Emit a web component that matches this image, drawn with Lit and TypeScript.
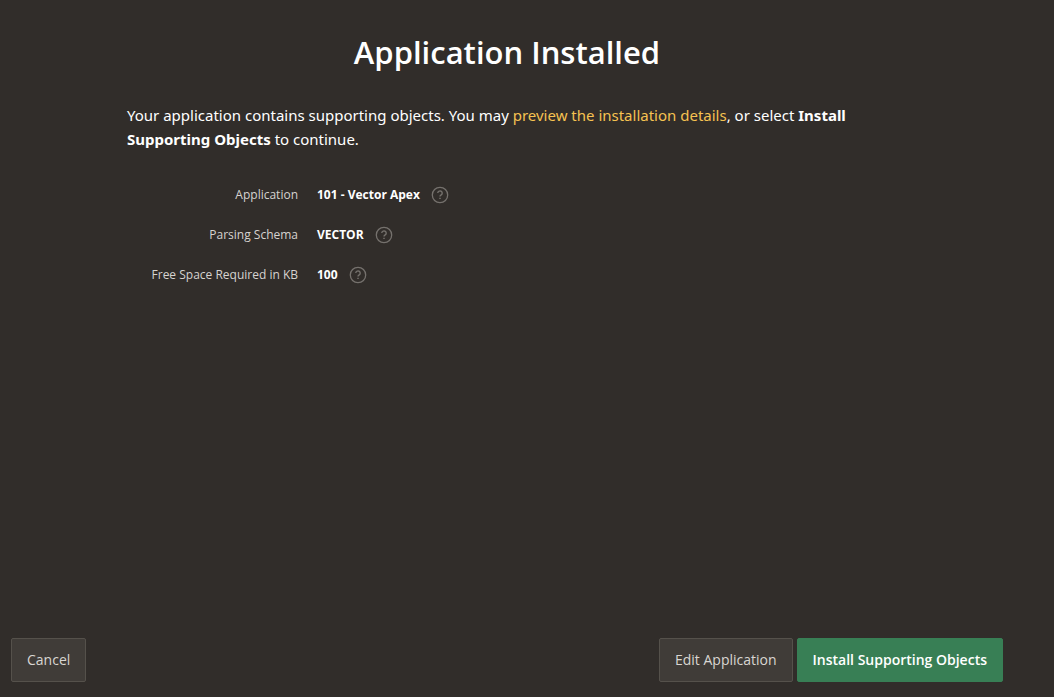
import { LitElement, html, css } from "lit";
import { customElement, property } from "lit/decorators.js";

@customElement("help-button")
class HelpButton extends LitElement {
  @property() label = "";

  static styles = css`
    :host {
      display: inline-flex;
    }
    .help {
      display: flex;
      padding: 0;
      border: 0;
      background: none;
      color: #75716d;
      cursor: pointer;
    }
    .icon {
      width: 18px;
      height: 18px;
    }
  `;

  render() {
    return html`
      <button class="help" type="button" aria-label="Help: ${this.label}">
        <svg class="icon" viewBox="0 0 18 18" fill="none" stroke="currentColor" aria-hidden="true">
          <circle cx="9" cy="9" r="7.7" stroke-width="1.3" />
          <path d="M6.8 7.1a2.2 2.1 0 1 1 3.4 1.7c-.8.5-1.2.8-1.2 1.7" stroke-width="1.4" />
          <path d="M9 11.7v1.4" stroke-width="1.5" />
        </svg>
      </button>
    `;
  }
}

interface Field {
  label: string;
  value: string;
}

@customElement("app-root")
class AppRoot extends LitElement {
  private fields: Field[] = [
    { label: "Application", value: "101 - Vector Apex" },
    { label: "Parsing Schema", value: "VECTOR" },
    { label: "Free Space Required in KB", value: "100" },
  ];

  static styles = css`
    :host {
      display: flex;
      flex-direction: column;
      box-sizing: border-box;
      min-height: 100vh;
      padding: 32px 51px 15px 11px;
      background: #312d2a;
      color: #fff;
      font-family: "Open Sans", "Noto Sans", sans-serif;
    }
    .content {
      flex: 1;
      width: 100%;
      max-width: 760px;
      margin: 0 auto;
    }
    .title {
      margin: 0;
      font-size: 31px;
      line-height: 40px;
      font-weight: 600;
      text-align: center;
    }
    .intro {
      margin: 31px 0 24px;
      font-family: "Noto Sans", sans-serif;
      font-size: 15px;
      line-height: 24px;
    }
    .link {
      color: #f6c251;
      text-decoration: none;
    }
    .fields {
      margin: 0;
    }
    .field {
      display: flex;
      align-items: center;
      height: 40px;
      font-size: 12px;
      line-height: 16px;
    }
    .label {
      width: 171px;
      margin-right: 19px;
      text-align: right;
      color: #d6d3d0;
    }
    .value {
      display: flex;
      align-items: center;
      gap: 11px;
      margin: 0;
      font-weight: 700;
    }
    .footer {
      display: flex;
      gap: 4px;
    }
    .button {
      padding: 11px 15px;
      border: 1px solid #55514b;
      border-radius: 2px;
      background: #403c38;
      color: #d9d6d2;
      font: inherit;
      font-size: 14px;
      line-height: 20px;
      cursor: pointer;
    }
    .cancel {
      margin-right: auto;
    }
    .primary {
      border-color: #387f55;
      background: #387f55;
      color: #fff;
      font-weight: 600;
    }
  `;

  render() {
    return html`
      <main class="content">
        <h1 class="title">Application Installed</h1>
        <p class="intro">
          Your application contains supporting objects. You may
          <a class="link" href="#details">preview the installation details</a>, or select
          <strong>Install Supporting Objects</strong> to continue.
        </p>
        <dl class="fields">
          ${this.fields.map(
            (f) => html`
              <div class="field">
                <dt class="label">${f.label}</dt>
                <dd class="value">
                  <span>${f.value}</span>
                  <help-button label=${f.label}></help-button>
                </dd>
              </div>
            `
          )}
        </dl>
      </main>
      <footer class="footer">
        <button class="button cancel" type="button">Cancel</button>
        <button class="button" type="button">Edit Application</button>
        <button class="button primary" type="button">Install Supporting Objects</button>
      </footer>
    `;
  }
}
